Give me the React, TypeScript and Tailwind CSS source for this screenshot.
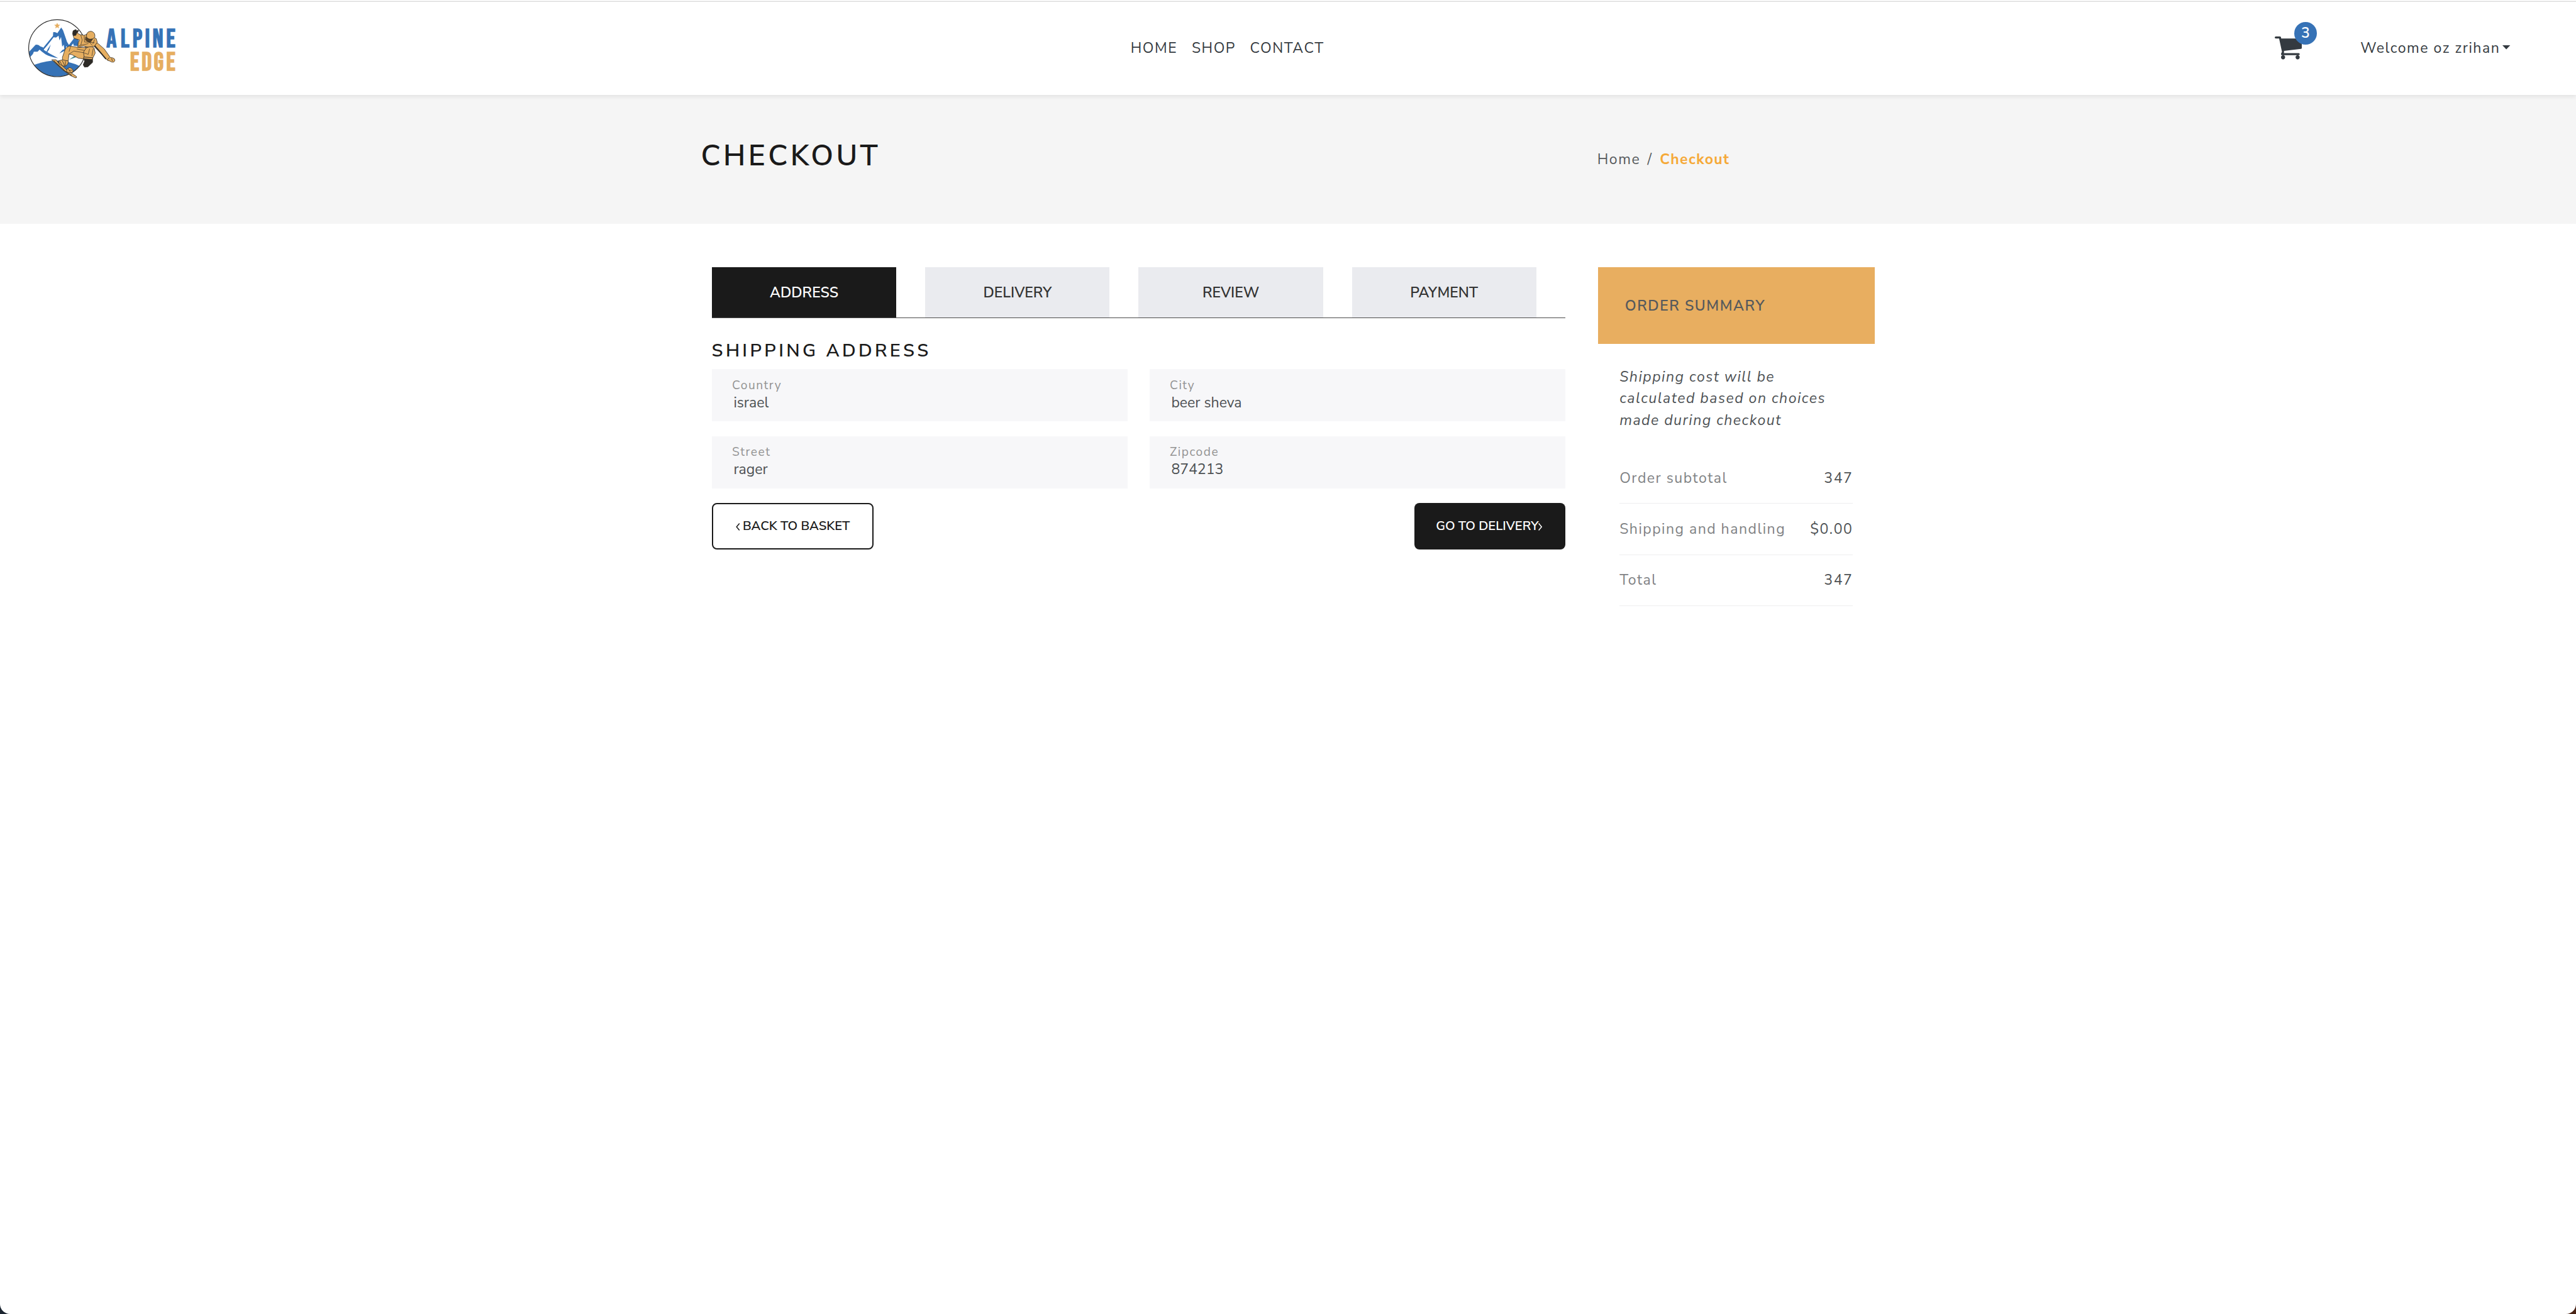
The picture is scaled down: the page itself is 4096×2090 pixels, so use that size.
import React from 'react';

function Logo() {
  return (
    <svg className="block h-[110px] w-[288px]" viewBox="0 28 360 137.5" role="img" aria-label="Alpine Edge">
      <g transform="translate(50 34) scale(0.33333)" strokeLinejoin="round" strokeLinecap="round">
        <clipPath id="disc">
          <circle cx="191" cy="187" r="169" />
        </clipPath>
        <g clipPath="url(#disc)" fill="#3672b6">
          <path d="M40 292Q95 268 160 261Q255 256 340 300L340 370L40 370Z" />
          <path d="M100 194L166 113L167 92Q178 88 192 97L215 64L226 80L250 150L268 178L256 182L244 176L243 192L236 208L230 166L221 178L214 120L205 140L199 112L184 124L170 122L132 170L106 200Z" />
          <path d="M18 214L42 188L62 167Q78 162 90 176L106 182L112 198L150 221L197 246Q150 240 122 224L100 208L86 196L74 208L52 208L46 222L24 246Z" />
          <path d="M125 212L136 190L153 165L142 196L128 216Z" />
          <path d="M204 218L222 198L248 186L264 164L296 122L318 134L318 174L290 172L286 158L270 180L240 200Z" />
          <path d="M262 256L300 228L306 240Z" fill="#4f8f94" />
        </g>
        <circle cx="191" cy="187" r="170" fill="none" stroke="#2b2b2b" strokeWidth="4.5" />
        <path d="M191 35L196 47L209 48L199 56L202 69L191 62L180 69L183 56L173 48L186 47Z" fill="#e6ae60" />
        <g fill="#e6ae60" stroke="#2d2a26" strokeWidth="3">
          <path d="M418 150L436 160L472 192L508 243Q520 241 532 250Q540 262 528 270Q514 272 506 264L492 260L452 218L414 180Z" />
          <path d="M414 172L440 202L480 250" fill="none" strokeWidth="7" />
          <path d="M500 244L490 258M516 250L520 262" fill="none" />
          <path d="M284 100L286 84L302 76L306 84L318 80L312 98L328 106L352 110L368 104L424 130L430 152L412 176L380 182L348 174L314 182L316 154L324 138L292 128Z" />
          <path d="M284 98L287 83L303 76L306 85L317 82L308 96L302 110L288 112Z" fill="#2d2a26" />
          <path d="M366 106Q370 86 394 86Q418 92 416 118Q408 136 382 134Q362 126 366 106Z" />
          <path d="M362 120Q376 138 402 132L392 148Q374 154 360 138Z" fill="#5a4326" />
          <path d="M352 112L354 150L412 154M332 110L340 138L332 168M320 172L376 160M414 136L404 160M382 150L400 170" fill="none" strokeWidth="2.5" />
          <path d="M262 174L318 182L376 184L350 252L316 246L280 226L262 222L256 264L224 262L222 242L240 190Z" />
          <path d="M366 184Q402 170 412 188L418 216L404 244L352 240L348 212Z" />
          <path d="M262 222L290 204L350 214M270 180L262 206M384 192L376 224L354 216M406 190L398 232M310 192L352 200" fill="none" strokeWidth="2.5" />
          <path d="M350 246L402 248L402 272L374 298L354 300L346 286L354 266Z" fill="#2d2a26" />
          <path d="M350 240L404 244L400 254L350 250Z" />
          <path d="M160 256L184 256L240 310L306 356Q310 364 300 364L270 350L226 318L180 276Z" />
          <path d="M172 264L236 322L276 348" fill="none" strokeWidth="4" />
          <path d="M200 262L222 256L258 264L254 282L238 296L226 292L206 284Z" />
          <path d="M250 312L262 302Q284 306 286 322Q284 334 268 334L248 328Z" />
          <path d="M206 264L218 286M222 262L236 292M240 266L240 292M190 264L204 282M256 308L270 330M262 320L278 318" fill="none" strokeWidth="3" />
        </g>
      </g>
      <g fontFamily="'Bebas Neue', Oswald, 'Liberation Sans', sans-serif" fontSize="50" strokeWidth="1.6">
        <text x="211.6 239.7 263.3 288 303 330.3" y="94.2" fill="#3672b6" stroke="#3672b6">ALPINE</text>
        <text x="258.4 281.3 305.6 330.3" y="140.3" fill="#e6ae60" stroke="#e6ae60">EDGE</text>
      </g>
    </svg>
  );
}

function CartIcon() {
  return (
    <svg className="block h-[36.4px] w-[43px]" viewBox="0 256 1664 1408" fill="#343a40">
      <path d="M640 1536q0 52-38 90t-90 38-90-38-38-90 38-90 90-38 90 38 38 90zm896 0q0 52-38 90t-90 38-90-38-38-90 38-90 90-38 90 38 38 90zm128-1088v512q0 24-16.5 42.5t-40.5 21.5l-1044 122q13 60 13 70 0 16-24 64h920q26 0 45 19t19 45-19 45-45 19h-1024q-26 0-45-19t-19-45q0-11 8-31.5t16-36 21.5-40 15.5-29.5l-177-823h-204q-26 0-45-19t-19-45 19-45 45-19h256q16 0 28.5 6.5t19.5 15.5 13 24.5 8 26 5.5 29.5 4.5 26h1201q26 0 45 19t19 45z" />
    </svg>
  );
}

function Header() {
  return (
    <header className="relative z-10 h-[151px] bg-white shadow-[0_3px_6.4px_rgba(0,0,0,0.075)]">
      <div className="h-px bg-white" />
      <div className="h-px bg-[#f0f0f0]" />
      <div className="h-px bg-[#dcdcdc]" />
      <div className="flex h-[147px] items-center text-[23.04px] leading-[34px] tracking-[1.54px] text-[#343a40]">
        <div className="w-[1797.8px] shrink-0">
          <Logo />
        </div>
        <nav className="flex w-[1819.2px] shrink-0">
          <a className="w-[97.1px]">HOME</a>
          <a className="w-[92.5px]">SHOP</a>
          <a>CONTACT</a>
        </nav>
        <div className="relative w-[136.2px] shrink-0">
          <CartIcon />
          <span className="absolute -top-[23px] left-[31px] flex size-9 items-center justify-center rounded-full bg-[#3672b6] font-semibold tracking-normal text-white">
            3
          </span>
        </div>
        <div className="flex items-center">
          <span className="w-[226px] whitespace-nowrap">Welcome oz zrihan</span>
          <svg className="-mt-[2px] h-[6.4px] w-[12.4px]" viewBox="0 0 12 6" preserveAspectRatio="none" fill="#343a40">
            <path d="M0 0H12L6 6Z" />
          </svg>
        </div>
      </div>
    </header>
  );
}

function Hero() {
  return (
    <section className="flex h-[205px] bg-[#f5f5f5] pt-[73px] pl-[1114.6px]">
      <h1 className="w-[1425.2px] text-[46.08px] leading-[48px] font-semibold tracking-[4.35px] text-[#1a1a1a]">CHECKOUT</h1>
      <div className="mt-[6px] flex text-[23.04px] leading-[48px] tracking-[1.54px] text-[#55595c]">
        <span className="w-[79.6px]">Home</span>
        <span className="w-[19.8px]">/</span>
        <span className="font-bold tracking-[1.38px] text-[#f5a937]">Checkout</span>
      </div>
    </section>
  );
}

const tabs = ['ADDRESS', 'DELIVERY', 'REVIEW', 'PAYMENT'];

function Tabs() {
  return (
    <div className="flex h-[81px] gap-[45.9px] border-b border-[#4a4a4a]">
      {tabs.map((tab, i) => (
        <div
          key={tab}
          className={
            i === 0
              ? 'flex w-[293.3px] items-center justify-center bg-[#1a1a1a] pt-[2px] text-[23.04px] font-semibold text-white'
              : 'flex w-[293.3px] items-center justify-center bg-[#eaebef] pt-[2px] text-[23.04px] font-semibold text-[#333]'
          }
        >
          {tab}
        </div>
      ))}
    </div>
  );
}

const fields = [
  ['Country', 'israel'],
  ['City', 'beer sheva'],
  ['Street', 'rager'],
  ['Zipcode', '874213'],
];

function AddressForm() {
  return (
    <div className="w-[1356.6px] shrink-0">
      <Tabs />
      <h2 className="mt-[34.5px] -ml-[0.4px] text-[28.8px] leading-[34px] font-semibold tracking-[4.38px] text-[#1a1a1a]">
        SHIPPING ADDRESS
      </h2>
      <div className="mt-[12.7px] grid grid-cols-2 gap-x-[35.4px] gap-y-[23.2px]">
        {fields.map(([label, value]) => (
          <div key={label} className="h-[83.2px] bg-[#f7f7f9] pt-[14.4px] pl-[32px]">
            <div className="text-[19.2px] leading-[22px] tracking-[1.5px] text-[#939393]">{label}</div>
            <div className="pt-[0.5px] pl-[2.4px] text-[23.04px] leading-[34px] text-[#4d5154]">{value}</div>
          </div>
        ))}
      </div>
      <div className="mt-[23.2px] flex justify-between text-[20.16px] leading-[28px] font-semibold">
        <button className="flex h-[74.4px] w-[256.8px] items-center rounded-[8px] border-[2.4px] border-[#1a1a1a] pl-[35.8px] text-[#1a1a1a]">
          <svg className="mt-[1px] mr-[4.8px] h-3 w-[6.4px] shrink-0" viewBox="0 0 6.4 12" fill="none" stroke="currentColor" strokeWidth="1.5">
            <path d="M5.8 0.6L1.2 6L5.8 11.4" />
          </svg>
          <span className="whitespace-nowrap">BACK TO BASKET</span>
        </button>
        <button className="flex h-[74.4px] w-[239.8px] items-center rounded-[8px] bg-[#1a1a1a] pl-[34.4px] text-white">
          <span className="whitespace-nowrap">GO TO DELIVERY</span>
          <svg className="mt-[1px] h-3 w-[6.4px] shrink-0" viewBox="0 0 6.4 12" fill="none" stroke="currentColor" strokeWidth="1.5">
            <path d="M0.6 0.6L5.2 6L0.6 11.4" />
          </svg>
        </button>
      </div>
    </div>
  );
}

const totals = [
  ['Order subtotal', '347'],
  ['Shipping and handling', '$0.00'],
  ['Total', '347'],
];

function OrderSummary() {
  return (
    <aside className="w-[440px] shrink-0 text-[23.04px] leading-[34.56px] tracking-[1.54px] text-[#4d5154]">
      <div className="flex h-[122.4px] items-center bg-[#e8ae60] pt-[2px] pl-[43px] font-semibold text-[#55595c]">ORDER SUMMARY</div>
      <div className="px-[34.4px] pt-[35.4px]">
        <p className="tracking-[1.5px] whitespace-nowrap italic">
          Shipping cost will be
          <br />
          calculated based on choices
          <br />
          made during checkout
        </p>
        <div className="mt-[33.9px]">
          {totals.map(([label, value]) => (
            <div key={label} className="flex h-[81.1px] items-center justify-between border-b border-[#eeeeef] pt-[2px] whitespace-nowrap">
              <span className="tracking-[1.5px] text-[#7f8284]">{label}</span>
              <span>{value}</span>
            </div>
          ))}
        </div>
      </div>
    </aside>
  );
}

export default function App() {
  return (
    <div className="h-[2090px] w-[4096px] overflow-hidden bg-[linear-gradient(90deg,#1b2530,#4a2416)] font-['Nunito_Sans','Nunito','Lato',sans-serif]">
      <div className="h-full overflow-hidden rounded-b-[16px] bg-white">
        <Header />
        <Hero />
        <main className="flex gap-[52.2px] pt-[69px] pl-[1132px]">
          <AddressForm />
          <OrderSummary />
        </main>
      </div>
    </div>
  );
}
